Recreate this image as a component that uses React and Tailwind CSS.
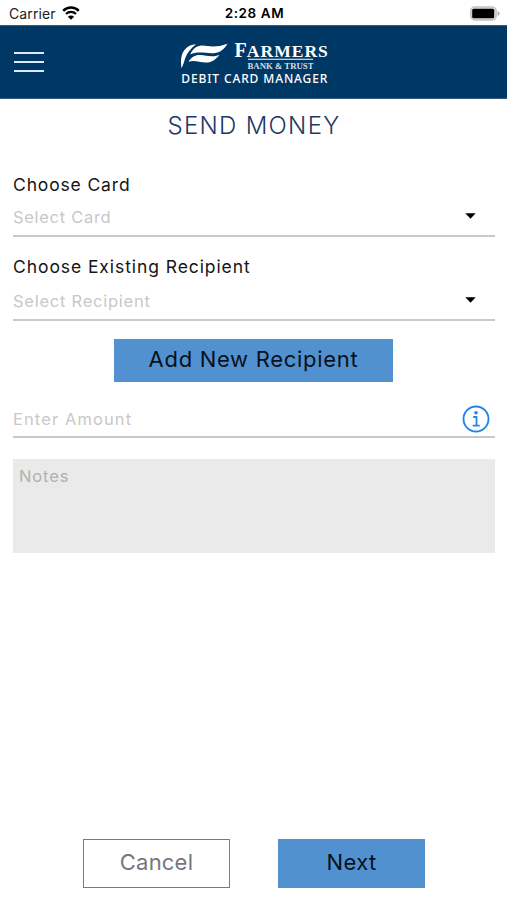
function StatusBar() {
  return (
    <div className="h-[25px] shrink-0 grid grid-cols-3 items-center pl-[9px] pr-[7px] pt-[2px] text-black">
      <div className="flex items-center gap-[6px]">
        <span className="text-[14px] leading-none tracking-[0.1px] text-[#222]">Carrier</span>
        <svg className="w-[18px] h-[14px] -mt-px" viewBox="0 0 18 14" fill="none">
          <path d="M1.2 4.8a11 11 0 0 1 15.6 0" stroke="#000" strokeWidth="2.5" />
          <path d="M4 8a7.1 7.1 0 0 1 10 0" stroke="#000" strokeWidth="2.3" />
          <path d="M9 13.8 5.9 10.7a4.4 4.4 0 0 1 6.2 0z" fill="#000" />
        </svg>
      </div>
      <div className="text-center text-[13.5px] font-semibold leading-none tracking-[0.6px] whitespace-nowrap">
        2:28 AM
      </div>
      <svg className="w-[31px] h-[15px] justify-self-end -mt-px" viewBox="0 0 31 15">
        <rect x="1.7" y="1" width="25.5" height="13" rx="4" fill="#ddd" stroke="#c2c2c2" strokeWidth="1.4" />
        <rect x="3.2" y="2.8" width="22" height="9.4" rx="1.5" fill="#000" />
        <path d="M28.6 5v5q2-.8 2-2.500t-2-2.500z" fill="#aaa" />
      </svg>
    </div>
  );
}

function Logo() {
  return (
    <svg className="w-[150px] h-[48px]" viewBox="179 38 150 48" fill="#fff">
      {/* Leaf mark: stem, upper blade, lower blade */}
      <path d="M181.500 68.300C180.600 62 180.800 55.500 183.500 51.500C186 47.500 190 44.600 196 44.300C191 48.500 187.500 52.500 185.800 56.800C184.200 60.500 183.500 65 181.500 68.300Z" />
      <path d="M190.300 54.500C192.300 49.500 196.300 45.600 202 45.600C208.500 45.600 214 48.500 227.600 43.800C224 49.500 220.300 52.600 214 53.200C206 53.700 197.500 50.800 190.300 54.500Z" />
      <path d="M188.500 61.800C191.300 57.300 195 54.700 200.500 55C206.500 55.500 212 57.500 219.500 54.900C215 60 211.500 62.500 205.500 62.500C199.500 62.500 194.500 59.800 188.500 61.800Z" />
      <text x="234.500" y="56.800" fontFamily="Liberation Serif, serif" fontWeight="700" fontSize="20">F</text>
      <text x="246.800" y="56.800" fontFamily="Liberation Serif, serif" fontWeight="700" fontSize="17.500" textLength="81" lengthAdjust="spacing">
        ARMERS
      </text>
      <path d="M248 58.800h65v1h-65z" />
      <text x="247.500" y="69" fontFamily="Liberation Serif, serif" fontWeight="700" fontSize="8.500" fillOpacity=".85" textLength="66" lengthAdjust="spacingAndGlyphs">
        BANK &amp; TRUST
      </text>
      <text x="181.300" y="83.200" fontFamily="Noto Sans, sans-serif" fontWeight="500" fontSize="12" textLength="146" lengthAdjust="spacing">
        DEBIT CARD MANAGER
      </text>
    </svg>
  );
}

function Header() {
  return (
    <header className="h-[74px] shrink-0 bg-[#003865] border-y border-[#315d83] grid grid-cols-[1fr_auto_1fr] items-center">
      <button className="ml-[14px] w-[30px] flex flex-col gap-[7px]">
        <span className="h-[2px] bg-[#dbeaff]" />
        <span className="h-[2px] bg-[#dbeaff]" />
        <span className="h-[2px] bg-[#dbeaff]" />
      </button>
      <Logo />
      <span />
    </header>
  );
}

function SelectRow({ placeholder, spacing }) {
  return (
    <div className="h-[39px] border-b-2 border-[#c8c8c8] flex items-center justify-between pt-[2px] pr-[19px]">
      <span className={`text-[16.5px] leading-none text-[#c8c8c8] ${spacing}`}>{placeholder}</span>
      <svg className="w-[11px] h-[6px] -mt-[3px]" viewBox="0 0 11 6">
        <path d="M.3.2h10.4L5.5 5.8z" fill="#000" />
      </svg>
    </div>
  );
}

export default function App() {
  return (
    <div className="w-full h-screen bg-white flex flex-col overflow-hidden font-['Inter',sans-serif]">
      <StatusBar />
      <Header />

      <main className="flex-1 flex flex-col pl-[13px] pr-[12px]">
        <h1 className="mt-[12px] h-[30px] leading-[30px] text-center text-[24px] font-light tracking-[1.3px] text-[#1f3864]">
          SEND MONEY
        </h1>

        <label className="mt-[33px] h-[22px] leading-[22px] text-[17.5px] tracking-[0.85px] text-[#151515]">
          Choose Card
        </label>
        <div className="mt-[2px]">
          <SelectRow placeholder="Select Card" spacing="tracking-[0.7px]" />
        </div>

        <label className="mt-[19px] h-[22px] leading-[22px] text-[17.5px] tracking-[0.92px] text-[#151515]">
          Choose Existing Recipient
        </label>
        <div className="mt-[4px]">
          <SelectRow placeholder="Select Recipient" spacing="tracking-[0.75px]" />
        </div>

        <button className="mt-[18px] mr-px self-center w-[279px] h-[43px] pb-[2px] bg-[#5191cf] text-[22px] tracking-[0.7px] text-[#08111c]">
          Add New Recipient
        </button>

        <div className="mt-[20px] h-[36px] border-b-2 border-[#c8c8c8] flex items-center justify-between pr-[5px]">
          <span className="text-[16.5px] leading-none tracking-[1.1px] text-[#c8c8c8]">Enter Amount</span>
          <svg className="w-[28px] h-[28px]" viewBox="0 0 28 28" fill="none" stroke="#2485e8">
            <circle cx="14" cy="14" r="12.5" strokeWidth="1.9" />
            <circle cx="14" cy="7.8" r="1.8" fill="#2485e8" stroke="none" />
            <path d="M11.200 12h3.300v8.500M10.700 20.600h7" strokeWidth="1.8" />
          </svg>
        </div>

        <div className="mt-[21px] h-[94px] bg-[#eaeaea] px-[6px] pt-[8px] text-[16.5px] leading-[18px] tracking-[0.9px] text-[#b0b0b0]">
          Notes
        </div>

        <div className="mt-auto mb-[12px] flex justify-center gap-[48px]">
          <button className="w-[147px] h-[49px] pb-[2px] border border-[#777b80] text-[22px] tracking-[0.2px] text-[#74777d]">
            Cancel
          </button>
          <button className="w-[147px] h-[49px] pb-[2px] bg-[#5191cf] text-[22px] tracking-[0.4px] text-[#08111c]">
            Next
          </button>
        </div>
      </main>
    </div>
  );
}
